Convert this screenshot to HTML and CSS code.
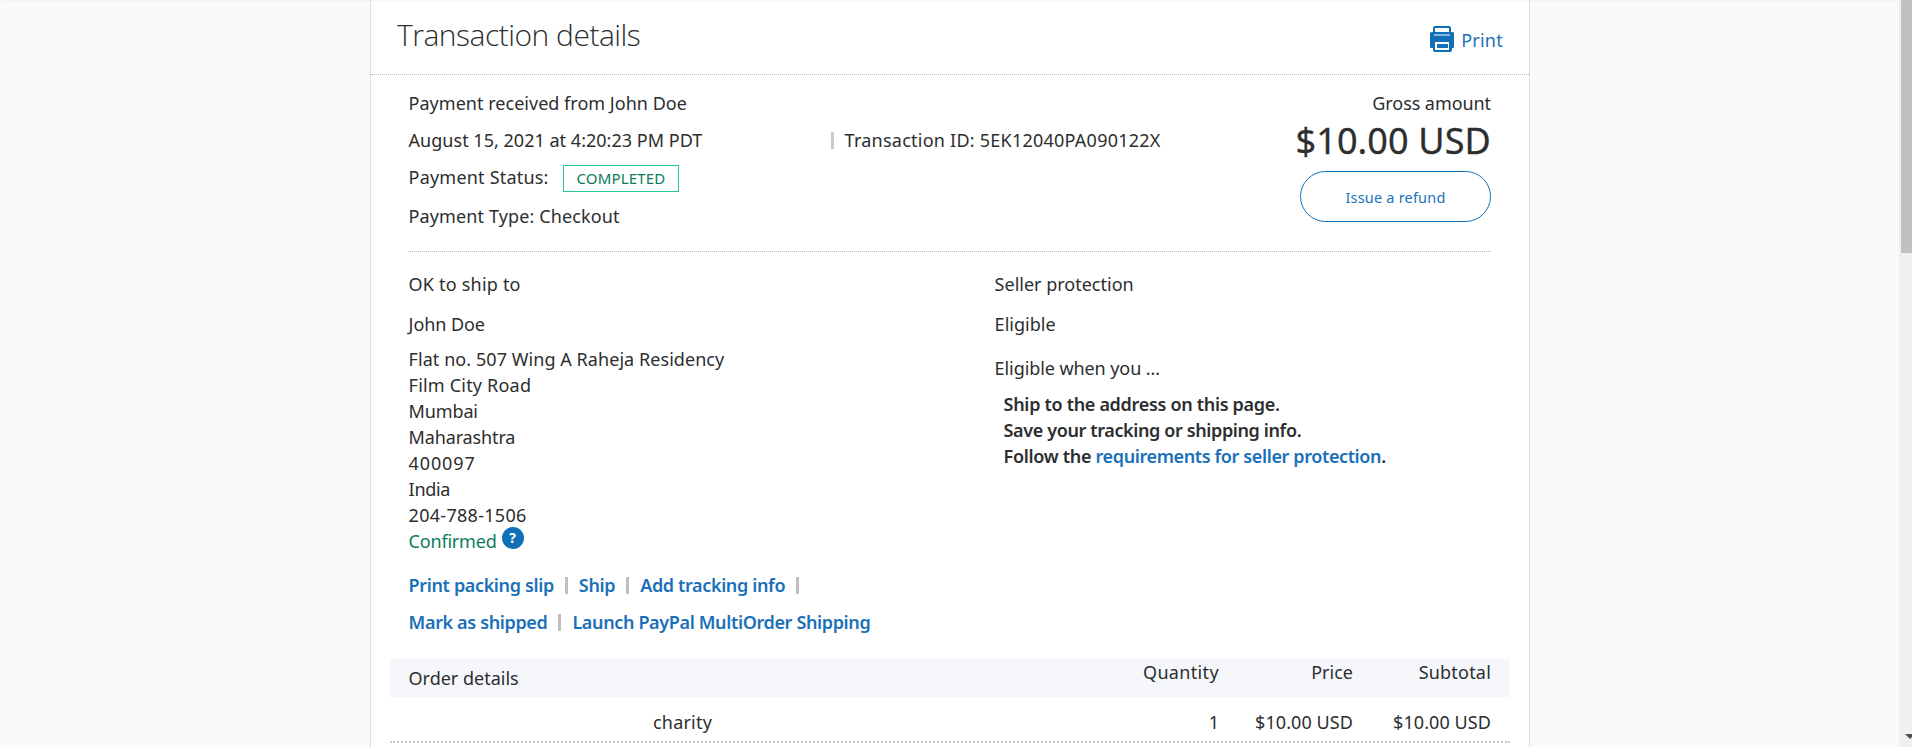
FILE: index.html
```
<!DOCTYPE html>
<html lang="en">
<head>
<meta charset="utf-8">
<title>Transaction details</title>
<link rel="stylesheet" href="styles.css">
</head>
<body>
<main class="panel">
  <header class="head">
    <h1 class="title">Transaction details</h1>
    <a class="print">
      <svg width="24" height="26" viewBox="0 0 24 26"><path fill="#0f6fb8" fill-rule="evenodd" d="M5 0h14a2 2 0 0 1 2 2v4h1.500q1.500 0 1.500 1.500V21q0 1-1 1h-1v2a2 2 0 0 1-2 2H5a2 2 0 0 1-2-2v-2H1q-1 0-1-1V7.500Q0 6 1.500 6H3V2a2 2 0 0 1 2-2zM5 2v4h14V2zM4 8.500v1h16v-1zM5 16v8h14v-8zM7 18h11v4H7z"/></svg>
      <span>Print</span>
    </a>
  </header>
  <section class="summary">
    <div class="facts">
      <div>Payment received from John Doe</div>
      <div class="date-row"><span class="date">August 15, 2021 at 4:20:23 PM PDT</span><i class="bar"></i><span class="tid">Transaction ID: 5EK12040PA090122X</span></div>
      <div class="status-row"><span class="ls2">Payment Status:</span><span class="badge">COMPLETED</span></div>
      <div class="ls1">Payment Type: Checkout</div>
    </div>
    <div class="gross">
      <div class="gross-label">Gross amount</div>
      <div class="amount">$10.00 USD</div>
      <button class="refund">Issue a refund</button>
    </div>
  </section>
  <section class="details">
    <div class="ship">
      <div class="ls2">OK to ship to</div>
      <div class="name">John Doe</div>
      <div class="street">Flat no. 507 Wing A Raheja Residency</div>
      <div class="ls2">Film City Road</div>
      <div class="tight">Mumbai</div>
      <div class="tight">Maharashtra</div>
      <div class="zip">400097</div>
      <div class="india">India</div>
      <div class="phone">204-788-1506</div>
      <div class="confirmed"><span>Confirmed</span><b class="help">?</b></div>
      <div class="links first"><a>Print packing slip</a><i class="bar"></i><a>Ship</a><i class="bar"></i><a>Add tracking info</a><i class="bar"></i></div>
      <div class="links"><a>Mark as shipped</a><i class="bar"></i><a>Launch PayPal MultiOrder Shipping</a></div>
    </div>
    <div class="seller">
      <div>Seller protection</div>
      <div class="eligible">Eligible</div>
      <div class="when">Eligible when you ...</div>
      <ul class="rules">
        <li>Ship to the address on this page.</li>
        <li class="save">Save your tracking or shipping info.</li>
        <li>Follow the <a>requirements for seller protection</a>.</li>
      </ul>
    </div>
  </section>
  <section class="order">
    <div class="row order-head"><span class="order-title">Order details</span><span></span><span class="ls3">Quantity</span><span>Price</span><span class="ls2">Subtotal</span></div>
    <div class="row item"><span></span><span class="ls2">charity</span><span>1</span><span class="money">$10.00 USD</span><span class="money">$10.00 USD</span></div>
  </section>
</main>
<div class="track"><div class="thumb"></div><svg class="arrow" width="10" height="5" viewBox="0 0 10 5"><path fill="#505050" d="M0 0h10L5 5z"/></svg></div>
</body>
</html>
```
FILE: styles.css
```
*{box-sizing:border-box}
body{margin:0;height:747px;overflow:hidden;background:#fafafa;color:#2c2e2f;font:400 18px/26px "Noto Sans","Open Sans",sans-serif;display:grid;grid-template-columns:370px 1160px 1fr 13px}
body::before{content:"";box-shadow:0 0 3px rgba(0,0,0,.12);position:absolute;left:0;right:0;top:-1px;height:1px}
.panel{grid-column:2;height:747px;overflow:hidden;background:#fff;border-left:1px dotted #c0c0c0;border-right:1px solid #dedede}
.head{height:75px;border-bottom:1px dotted #b8b8b8;display:flex;justify-content:space-between;align-items:flex-start;padding:0 26px}
.title{margin:14px 0 0;font:300 30px/41px "Open Sans","Noto Sans",sans-serif;letter-spacing:-.5px}
.print{display:flex;gap:7px;margin-top:26px;color:#1c70b8;letter-spacing:.25px}
.print span{margin-top:1px}
.summary{height:177px;margin:0 38px 0 37px;padding-top:15px;border-bottom:1px dotted #b8b8b8;display:flex;justify-content:space-between}
.facts{padding-left:.6px;letter-spacing:.02px}
.date-row{display:flex;margin-top:11px}
.date{width:422px}
.tid{letter-spacing:.24px}
.date-row .tid{margin-left:11px}
.bar{width:3px;height:17px;margin-top:5px;background:#c9c9cf}
.status-row{display:flex;margin-top:11px;gap:14.400px}
.badge{width:116px;height:27px;margin-top:1px;border:1px solid #25c799;color:#0c7b5c;font-size:15px;line-height:25px;text-align:center;letter-spacing:.18px}
.status-row+div{margin-top:11px}
.gross{display:flex;flex-direction:column;align-items:flex-end;white-space:nowrap}
.gross-label{letter-spacing:-.07px}
.amount{font-size:36px;line-height:52px;margin-top:-1px;letter-spacing:.12px;-webkit-text-stroke:.3px #2c2e2f}
.refund{width:191px;height:51px;margin-top:4px;padding:0;border:1px solid #0f74bc;border-radius:26px;background:#fff;color:#1a72bb;font:400 14.500px "Noto Sans","Open Sans",sans-serif;letter-spacing:.2px}
.details{height:407px;padding:19px 37px 0 37.600px;display:grid;grid-template-columns:586px 1fr}
.name,.eligible{margin-top:14px;letter-spacing:-.08px}
.eligible{letter-spacing:.03px}
.name{margin-bottom:9px}
.street{letter-spacing:.06px}
.ls1{letter-spacing:.12px}
.ls2{letter-spacing:.2px}
.ls3{letter-spacing:.35px}
.tight{letter-spacing:-.14px}
.zip{letter-spacing:.87px}
.india{letter-spacing:-.3px}
.phone{letter-spacing:.29px}
.confirmed{display:flex;gap:5px;color:#0c7b5c;letter-spacing:-.19px}
.help{width:22px;height:22px;margin-top:-1px;border-radius:50%;background:#0f6fb8;color:#fff;font-size:14px;line-height:22px;text-align:center}
.links{display:flex;margin-top:11px;font-weight:600;letter-spacing:-.36px}
.links.first{margin-top:18px}
.links .bar{margin-left:11px;margin-right:11px;background:#bfbfbf}
a{color:#1a70b8}
.when{margin-top:18px;letter-spacing:-.08px}
.rules{list-style:none;margin:10px 0 0;padding:0 0 0 9px;font-weight:600;letter-spacing:-.31px}
.rules .save,.rules a{letter-spacing:-.38px}
.order{margin:0 19px}
.row{display:grid;grid-template-columns:256px 1fr 110px 134px 138px;padding:0 19px 0 0}
.row span:nth-child(n+3){text-align:right}
.order-head{height:38px;background:#f5f7fb}
.order-title{padding:6px 0 0 18.500px}
.item{height:46px;padding-top:12px;border-bottom:2px dotted #c8c8c8}
.item span:nth-child(2){padding-left:7px}
.money{letter-spacing:.08px}
.track{grid-column:4;background:#f0f0f0;position:relative}
.thumb{height:253px;margin-left:2px;background:#c1c1c1}
.arrow{position:absolute;left:6px;bottom:8px}
```
